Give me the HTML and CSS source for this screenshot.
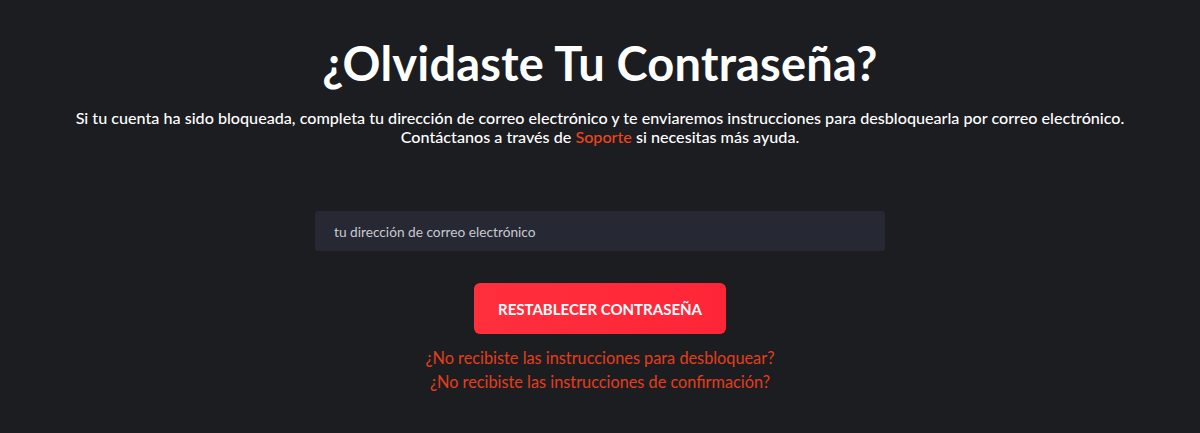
FILE: index.html
```html
<!DOCTYPE html>
<html lang="es">
<head>
<meta charset="utf-8">
<title>¿Olvidaste Tu Contraseña?</title>
<link rel="stylesheet" href="styles.css">
</head>
<body>
<main class="page">
  <h1 class="title">¿Olvidaste Tu Contraseña?</h1>
  <p class="intro">Si tu cuenta ha sido bloqueada, completa tu dirección de correo electrónico y te enviaremos instrucciones para desbloquearla por correo electrónico.<br>Contáctanos a través de <a class="support" href="#">Soporte</a> si necesitas más ayuda.</p>
  <form class="form">
    <input class="email" type="email" placeholder="tu dirección de correo electrónico">
    <button class="submit" type="button">RESTABLECER CONTRASEÑA</button>
  </form>
  <nav class="links">
    <a class="link" href="#">¿No recibiste las instrucciones para desbloquear?</a>
    <a class="link" href="#">¿No recibiste las instrucciones de confirmación?</a>
  </nav>
</main>
</body>
</html>
```
FILE: styles.css
```css
* { box-sizing: border-box; }
html, body { margin: 0; padding: 0; }
body {
  background: #1c1d21;
  color: #ffffff;
  font-family: Lato, "Noto Sans", sans-serif;
  height: 433px;
  overflow: hidden;
}
.page {
  display: flex;
  flex-direction: column;
  align-items: center;
  padding-top: 35px;
}
.title {
  margin: 0;
  font-size: 47px;
  font-weight: 700;
  line-height: 56px;
  letter-spacing: 0.2px;
}
.intro {
  margin: 17px 0 0;
  font-size: 16.15px;
  line-height: 19px;
  text-align: center;
  font-weight: 500;
}
.support { color: #f0431f; text-decoration: none; }
.form {
  display: flex;
  flex-direction: column;
  align-items: center;
  margin-top: 65px;
}
.email {
  width: 570px;
  height: 40px;
  border: none;
  border-radius: 3px;
  background: #262833;
  padding: 0 19px;
  font-family: inherit;
  font-size: 13.7px;
  color: #fff;
  outline: none;
}
.email::placeholder { color: #c9cad0; }
.submit {
  margin-top: 32px;
  width: 252px;
  height: 51px;
  border: none;
  border-radius: 6px;
  background: linear-gradient(90deg, #ff2f3c, #ff2538);
  color: #fff;
  font-family: inherit;
  font-weight: 700;
  font-size: 15px;
}
.links {
  display: flex;
  flex-direction: column;
  align-items: center;
  margin-top: 14px;
  gap: 5px;
}
.link {
  color: #e43d1c;
  text-decoration: none;
  font-size: 16.3px;
  line-height: 19px;
}
```
